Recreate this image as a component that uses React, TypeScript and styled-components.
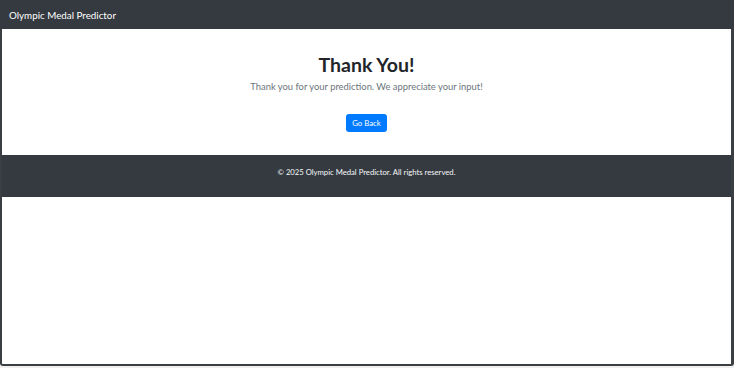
import styled, { createGlobalStyle } from 'styled-components';

const GlobalStyle = createGlobalStyle`
	html, body {
		margin: 0;
		padding: 0;
		background: #f0f0f0;
	}
	body {
		font-family: Lato, 'Open Sans', sans-serif;
	}
`;

const Frame = styled.div`
	box-sizing: border-box;
	height: 366px;
	width: 734px;
	background: #ffffff;
	border-left: 2px solid #3a3f44;
	border-right: 3px solid #3a3f44;
	border-bottom: 2px solid #3a3f44;
	border-bottom-right-radius: 3px;
	border-bottom-left-radius: 3px;
	display: flex;
	flex-direction: column;
`;

const Navbar = styled.header`
	height: 29px;
	margin: 0 -3px 0 -2px;
	background: #343a40;
	display: flex;
	align-items: center;
	padding: 0 9px;
	color: #ffffff;
	font-size: 9.8px;
`;

const Main = styled.main`
	display: flex;
	flex-direction: column;
	align-items: center;
	padding: 23px 0 0;
	height: 126px;
	box-sizing: border-box;
`;

const Title = styled.h1`
	margin: 0;
	font-size: 19.5px;
	font-weight: 700;
	color: #212529;
	line-height: 25px;
`;

const Lead = styled.p`
	margin: 3px 0 0;
	font-size: 9.4px;
	font-weight: 400;
	color: #6c757d;
	line-height: 13px;
`;

const Button = styled.button`
	margin-top: 21px;
	height: 18px;
	padding: 0 6px;
	border: none;
	border-radius: 3px;
	background: #007bff;
	color: #ffffff;
	font-family: inherit;
	font-size: 7.8px;
	cursor: pointer;
`;

const Footer = styled.footer`
	box-sizing: border-box;
	height: 42px;
	padding-bottom: 8px;
	background: #343a40;
	display: flex;
	align-items: center;
	justify-content: center;
	color: #f8f9fa;
	font-size: 7.7px;
`;

export default function App() {
	return (
		<>
			<GlobalStyle />
			<Frame>
				<Navbar>Olympic Medal Predictor</Navbar>
				<Main>
					<Title>Thank You!</Title>
					<Lead>Thank you for your prediction. We appreciate your input!</Lead>
					<Button>Go Back</Button>
				</Main>
				<Footer>© 2025 Olympic Medal Predictor. All rights reserved.</Footer>
			</Frame>
		</>
	);
}
